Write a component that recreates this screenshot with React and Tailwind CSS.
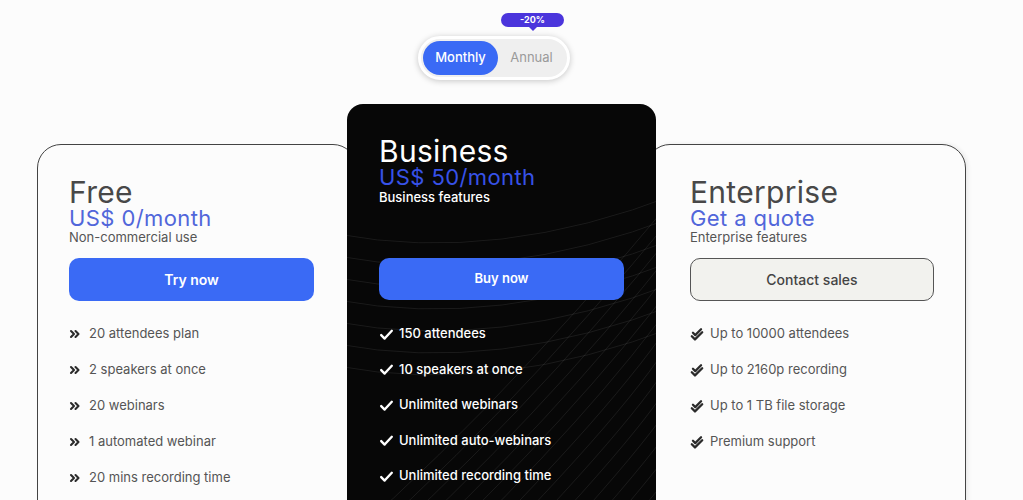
import React, {useState} from 'react';

const plans = {
    free: ['20 attendees plan', '2 speakers at once', '20 webinars', '1 automated webinar', '20 mins recording time'],
    business: ['150 attendees', '10 speakers at once', 'Unlimited webinars', 'Unlimited auto-webinars', 'Unlimited recording time'],
    enterprise: ['Up to 10000 attendees', 'Up to 2160p recording', 'Up to 1 TB file storage', 'Premium support'],
};

function Chevrons() {
    return (
        <svg width="12" height="12" viewBox="0 0 24 24" fill="none" stroke="#2b2b2b" strokeWidth="4.2"
             strokeLinecap="round" strokeLinejoin="round">
            <path d="M4 6l6 6-6 6"/>
            <path d="M13 6l6 6-6 6"/>
        </svg>
    );
}

function Check() {
    return (
        <svg width="15" height="15" viewBox="0 0 24 24" fill="none" stroke="#ffffff" strokeWidth="3.8"
             strokeLinecap="round" strokeLinejoin="round">
            <path d="M3.5 13l5.5 5.5L20.5 6"/>
        </svg>
    );
}

function DoubleCheck() {
    return (
        <svg width="14" height="15" viewBox="0 0 24 26" fill="none" stroke="#2b2b2b" strokeWidth="4"
             strokeLinecap="round" strokeLinejoin="round">
            <path d="M5 10l4 4 10-10"/>
            <path d="M3 16l5.5 5.5L21 9"/>
        </svg>
    );
}

// faint fan of curves behind the business card
function Waves() {
    const lines = [];
    for (let i = 0; i < 16; i++) {
        const xb = 20 + i * 20;
        const yr = 150 + i * 17;
        lines.push(
            <path key={'f' + i} d={`M${xb - 60} 470 Q ${xb + 110} ${330 - i * 4} 330 ${yr - 60}`}/>
        );
    }
    for (let i = 0; i < 7; i++) {
        const y = 120 + i * 22;
        lines.push(
            <path key={'h' + i} d={`M-10 ${y + 10} Q 150 ${y + 40} 330 ${y - 30}`}/>
        );
    }
    return (
        <svg className="absolute inset-0 w-full h-full" viewBox="0 0 309 440" preserveAspectRatio="none" fill="none"
             stroke="#ffffff" strokeOpacity="0.1" strokeWidth="0.8">
            {lines}
        </svg>
    );
}

function Feature({icon, text, dark}) {
    return (
        <li className="flex items-center h-[20px]">
            <span className="w-[20px] flex items-center">{icon}</span>
            <span className={dark ? "text-[13px] text-white font-medium" : "text-[13px] text-[#555]"}>{text}</span>
        </li>
    );
}

export default function App() {
    const [annual, setAnnual] = useState(false);

    return (
        <div className="min-h-screen bg-[#fcfcfc] font-['Inter','Liberation_Sans',sans-serif] overflow-hidden">
            <div className="relative ml-[418px] pt-[36px] w-fit">
                <div className="absolute top-[13px] left-[83px] flex flex-col items-center">
                    <span
                        className="h-[14px] w-[63px] rounded-full bg-[#4b35dc] text-white text-[9px] font-bold flex items-center justify-center">-20%</span>
                    <span
                        className="w-0 h-0 border-l-[4px] border-r-[4px] border-t-[4px] border-l-transparent border-r-transparent border-t-[#4b35dc]"></span>
                </div>
                <div
                    className="flex items-center h-[44px] w-[152px] rounded-full bg-[#efefef] border-[3px] border-white shadow-[0_1px_6px_rgba(0,0,0,0.22)] p-[2px]">
                    <button onClick={() => setAnnual(false)}
                            className={"h-[34px] w-[75px] rounded-full text-[13px] font-medium " + (annual ? "text-[#9a9a9a]" : "bg-[#3a6af5] text-white")}>
                        Monthly
                    </button>
                    <button onClick={() => setAnnual(true)}
                            className={"h-[34px] flex-1 rounded-full text-[13px] " + (annual ? "bg-[#3a6af5] text-white font-medium" : "text-[#9a9a9a]")}>
                        Annual
                    </button>
                </div>
            </div>

            <div className="flex items-start ml-[37px] mt-[24px]">
                {/* Free */}
                <div
                    className="w-[320px] min-h-[420px] mt-[40px] border border-[#444] rounded-[24px] bg-[#fcfcfc] pl-[31px] pt-[32px]">
                    <h3 className="text-[30px] leading-[30px] tracking-[0.3px] text-[#484848]">Free</h3>
                    <p className="text-[22px] leading-[22px] tracking-[0.4px] text-[#5166da]">US$ 0/month</p>
                    <p className="mt-[2px] text-[13px] leading-[13px] text-[#555]">Non-commercial use</p>
                    <button
                        className="mt-[14px] w-[245px] h-[43px] rounded-[10px] bg-[#3a6af5] text-white text-[14px] font-semibold">
                        Try now
                    </button>
                    <ul className="mt-[23px] flex flex-col gap-[16px]">
                        {plans.free.map(f => <Feature key={f} icon={<Chevrons/>} text={f}/>)}
                    </ul>
                </div>

                {/* Business */}
                <div
                    className="relative z-10 -mx-[10px] w-[309px] min-h-[440px] rounded-[16px] bg-[#070707] overflow-hidden pl-[32px] pt-[32px]">
                    <Waves/>
                    <div className="relative">
                        <h3 className="text-[30px] leading-[30px] tracking-[0.3px] text-white">Business</h3>
                        <p className="text-[22px] leading-[22px] tracking-[0.4px] text-[#3752e8]">US$ 50/month</p>
                        <p className="mt-[3px] text-[13px] leading-[13px] text-white font-medium">Business features</p>
                        <button
                            className="mt-[54px] w-[245px] h-[42px] rounded-[10px] bg-[#3a6af5] text-white text-[13px] font-semibold">
                            Buy now
                        </button>
                        <ul className="mt-[24px] flex flex-col gap-[15.5px]">
                            {plans.business.map(f => <Feature key={f} icon={<Check/>} text={f} dark/>)}
                        </ul>
                    </div>
                </div>

                {/* Enterprise */}
                <div
                    className="w-[320px] min-h-[420px] mt-[40px] border border-[#444] rounded-[24px] bg-[#fcfcfc] pl-[43px] pt-[32px] shadow-[2px_0_4px_rgba(0,0,0,0.08)]">
                    <h3 className="text-[30px] leading-[30px] tracking-[0.3px] text-[#484848]">Enterprise</h3>
                    <p className="text-[22px] leading-[22px] tracking-[0.4px] text-[#5166da]">Get a quote</p>
                    <p className="mt-[2px] text-[13px] leading-[13px] text-[#555]">Enterprise features</p>
                    <button
                        className="mt-[14px] w-[244px] h-[43px] rounded-[10px] bg-[#f2f2ee] border border-[#555] text-[#444] text-[14px] font-medium">
                        Contact sales
                    </button>
                    <ul className="mt-[23px] flex flex-col gap-[16px]">
                        {plans.enterprise.map(f => <Feature key={f} icon={<DoubleCheck/>} text={f}/>)}
                    </ul>
                </div>
            </div>
        </div>
    );
}
